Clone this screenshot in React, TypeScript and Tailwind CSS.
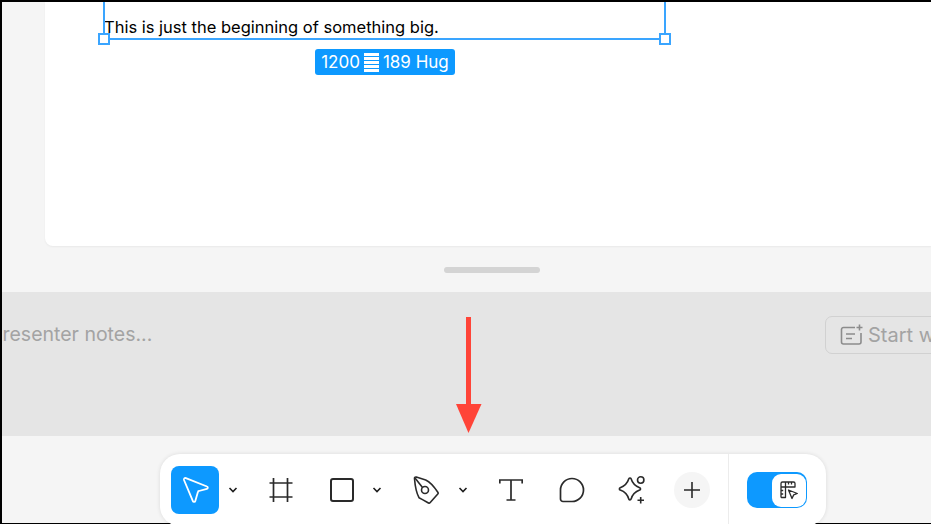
const FONT = 'font-["Inter",_"Liberation_Sans",sans-serif]';

function Chevron() {
  return (
    <svg width="10" height="6" viewBox="0 0 10 6" fill="none" stroke="#1e1e1e" strokeWidth="1.6">
      <path d="M1.500 1 5 4.500 8.500 1" />
    </svg>
  );
}

function PointerIcon() {
  return (
    <svg width="28" height="28" viewBox="0 0 28 28" fill="none" stroke="white" strokeWidth="1.8" strokeLinejoin="round">
      <path d="M3 4c-.4-1.200.7-2.300 1.900-1.900L26 10.500c1.100.4 1.100 2-.1 2.300l-8 2.200c-.5.1-.9.5-1 1l-2.600 9c-.3 1.200-2 1.300-2.400.1Z" />
    </svg>
  );
}

function FrameIcon() {
  return (
    <svg width="26" height="26" viewBox="0 0 26 26" fill="none" stroke="#2a2a2a" strokeWidth="1.700">
      <path d="M5.500 1v24M19.500 1v24M1.500 6h23M1.500 20h23" />
    </svg>
  );
}

function PenIcon() {
  return (
    <svg width="30" height="30" viewBox="0 0 30 30" fill="none" stroke="#2a2a2a" strokeWidth="1.600" strokeLinejoin="round">
      <path d="M2.500 3.800c-.3-1.200.6-2 1.800-1.700L13.700 5c4.500 2 9 7.500 12.300 12.500.3.500.3 1 0 1.300l-8 9c-.4.4-.9.5-1.400.2-3-1.700-6.100-3.500-9.600-5.300C5 19 3.300 13.500 2.500 3.800Z" />
      <path d="M3 3l7.500 9.500" />
      <circle cx="13" cy="15" r="3.500" />
    </svg>
  );
}

function TextIcon() {
  return (
    <svg width="24" height="24" viewBox="0 0 24 24" fill="none" stroke="#2a2a2a" strokeWidth="1.700">
      <path d="M.8 5.500V2h22.400v3.500M12 2v20M7.500 22h9" />
    </svg>
  );
}

function CommentIcon() {
  return (
    <svg width="26" height="26" viewBox="0 0 26 26" fill="none" stroke="#2a2a2a" strokeWidth="1.700">
      <path d="M13 1.500a11.500 11.500 0 0 1 0 23H4a2.500 2.500 0 0 1-2.500-2.500v-9A11.500 11.500 0 0 1 13 1.500Z" />
    </svg>
  );
}

function StarIcon() {
  return (
    <svg width="28" height="28" viewBox="0 0 28 28" fill="none" stroke="#2a2a2a" strokeWidth="1.600" strokeLinejoin="round">
      <path d="M11.800 2.800c.5-1 1.900-1 2.300 0 1.300 4.500 3.500 7 8.600 9 1.100.5 1.100 1.900 0 2.300-5 1.800-7.300 4.300-8.600 9-.4 1.100-1.800 1.100-2.300 0-1.300-4.700-3.500-7.200-8.600-9-1.100-.4-1.100-1.800 0-2.300 5.100-2 7.300-4.500 8.600-9Z" />
      <circle cx="23.700" cy="4" r="3.200" />
      <path d="M20.500 24.200h6.500M23.700 21v6.500" />
    </svg>
  );
}

function DevModeIcon() {
  return (
    <svg width="20" height="20" viewBox="0 0 20 20" fill="none" stroke="#2a2a2a" strokeWidth="1.300" strokeLinejoin="round">
      <path d="M2 17V3.500A1.500 1.500 0 0 1 3.500 2h11A1.500 1.500 0 0 1 16 3.500V7H6.500v10.500H2.500Z" />
      <path d="M2 7h4.500M6.500 2v5M9.500 2v2.500M12.500 2v2.500M2 10.500h2.200M2 14h2.200" />
      <path d="M9.500 10l8.800 3.500-3.600 1.400-1.700 3.600Z" />
    </svg>
  );
}

function NotesIcon() {
  return (
    <svg width="24" height="22" viewBox="0 0 24 22" fill="none" stroke="#8c8c8c" strokeWidth="1.600">
      <path d="M15 3.500H3.500a2 2 0 0 0-2 2V18a2 2 0 0 0 2 2H19a2 2 0 0 0 2-2V9" />
      <path d="M6 10h9M6 14.500h6" />
      <path d="M19.500 .5v6M16.500 3.500h6" />
    </svg>
  );
}

function Handle({ className }: { className: string }) {
  return <span className={`absolute top-[31px] w-[12px] h-[12px] bg-white border-2 border-[#3aa5ff] ${className}`} />;
}

export default function App() {
  return (
    <div className={`${FONT} relative w-[931px] h-[524px] overflow-hidden bg-black pl-[2px] pt-[2px] pb-[1.500px] flex flex-col`}>
      {/* Canvas */}
      <div className="relative h-[290px] shrink-0 bg-[#f5f5f5] pl-[43px] overflow-hidden">
        <div className="relative h-[244px] bg-white rounded-bl-[8px] shadow-[0_1px_2px_rgba(0,0,0,0.05)]">
          <p className="pl-[59px] pt-[15px] text-[16.500px] leading-[20px] text-black">This is just the beginning of something big.</p>

          {/* Selection */}
          <div className="absolute left-[58px] top-[-2px] w-[563px] h-[40px] border-x-2 border-b-2 border-[#3aa5ff]" />
          <Handle className="left-[53px]" />
          <Handle className="left-[614px]" />

          <div className="absolute left-[270px] top-[47px] h-[26px] w-[140px] rounded-[3px] bg-[#0d99ff] text-white text-[17px] leading-[26px] flex items-center justify-center gap-[4px]">
            <span>1200</span>
            <span className="flex flex-col gap-[1px]">
              {[0, 1, 2, 3, 4].map((i) => (
                <span key={i} className="block w-[15px] h-[3px] bg-white" />
              ))}
            </span>
            <span>189 Hug</span>
          </div>
        </div>
        <div className="mt-[21px] ml-[399px] w-[96px] h-[6px] rounded-full bg-[#d4d4d4]" />
      </div>

      {/* Presenter notes */}
      <div className="h-[144px] shrink-0 bg-[#e5e5e5] flex items-start justify-between overflow-hidden pt-[24px]">
        <span className="ml-[-12px] mt-[5px] text-[19.500px] leading-[26px] text-[#a3a3a3]">Presenter notes...</span>
        <div className="mr-[-100px] w-[206px] h-[38px] shrink-0 rounded-[7px] border border-[#d1d1d1] flex items-center pl-[14px] gap-[4px] text-[20px] text-[#a3a3a3]">
          <NotesIcon />
          <span>Start writing</span>
        </div>
      </div>

      {/* Toolbar */}
      <div className="flex-1 min-h-0 bg-[#f5f5f5] pl-[157.500px] pt-[18px]">
        <div className="w-[666px] h-[72px] rounded-[20px] bg-white shadow-[0_0_4px_rgba(0,0,0,0.11)] flex items-start pl-[11.500px] pt-[12px]">
          <div className="w-[48px] h-[48px] rounded-[8px] bg-[#0d99ff] flex items-center justify-center">
            <PointerIcon />
          </div>
          <div className="w-[28px] h-[48px] flex items-center justify-center"><Chevron /></div>
          <div className="w-[68px] h-[48px] flex items-center justify-center"><FrameIcon /></div>
          <div className="w-[54px] h-[48px] flex items-center justify-center">
            <span className="block w-[24px] h-[24px] rounded-[3px] border-2 border-[#2a2a2a]" />
          </div>
          <div className="w-[16px] h-[48px] flex items-center justify-center"><Chevron /></div>
          <div className="w-[70px] h-[48px] pl-[13px] flex items-center justify-center"><PenIcon /></div>
          <div className="w-[16px] h-[48px] flex items-center justify-center"><Chevron /></div>
          <div className="w-[80px] h-[48px] flex items-center justify-center"><TextIcon /></div>
          <div className="w-[42px] h-[48px] flex items-center justify-center"><CommentIcon /></div>
          <div className="w-[76px] h-[48px] flex items-center justify-center"><StarIcon /></div>
          <div className="ml-[5px] mt-[6px] w-[36px] h-[36px] shrink-0 rounded-full bg-[#f5f5f5] flex items-center justify-center">
            <svg width="18" height="18" viewBox="0 0 18 18" fill="none" stroke="#2a2a2a" strokeWidth="1.600">
              <path d="M9 1v16M1 9h16" />
            </svg>
          </div>
          <div className="ml-[18px] mt-[-12px] w-px h-[72px] shrink-0 bg-[#ececec]" />
          <div className="ml-[18px] mt-[6px] w-[60px] h-[36px] shrink-0 rounded-[10px] bg-[#0d99ff] flex justify-end p-[1.500px]">
            <div className="w-[34px] h-[33px] rounded-[9px] bg-white flex items-center justify-center">
              <DevModeIcon />
            </div>
          </div>
        </div>
      </div>

      {/* Annotation arrow */}
      <svg className="absolute left-[450px] top-[315px]" width="36" height="120" viewBox="0 0 36 120">
        <rect x="16" y="2" width="5" height="90" fill="#ff4438" />
        <path d="M6 89h25.500L18.500 118Z" fill="#ff4438" />
      </svg>
    </div>
  );
}
